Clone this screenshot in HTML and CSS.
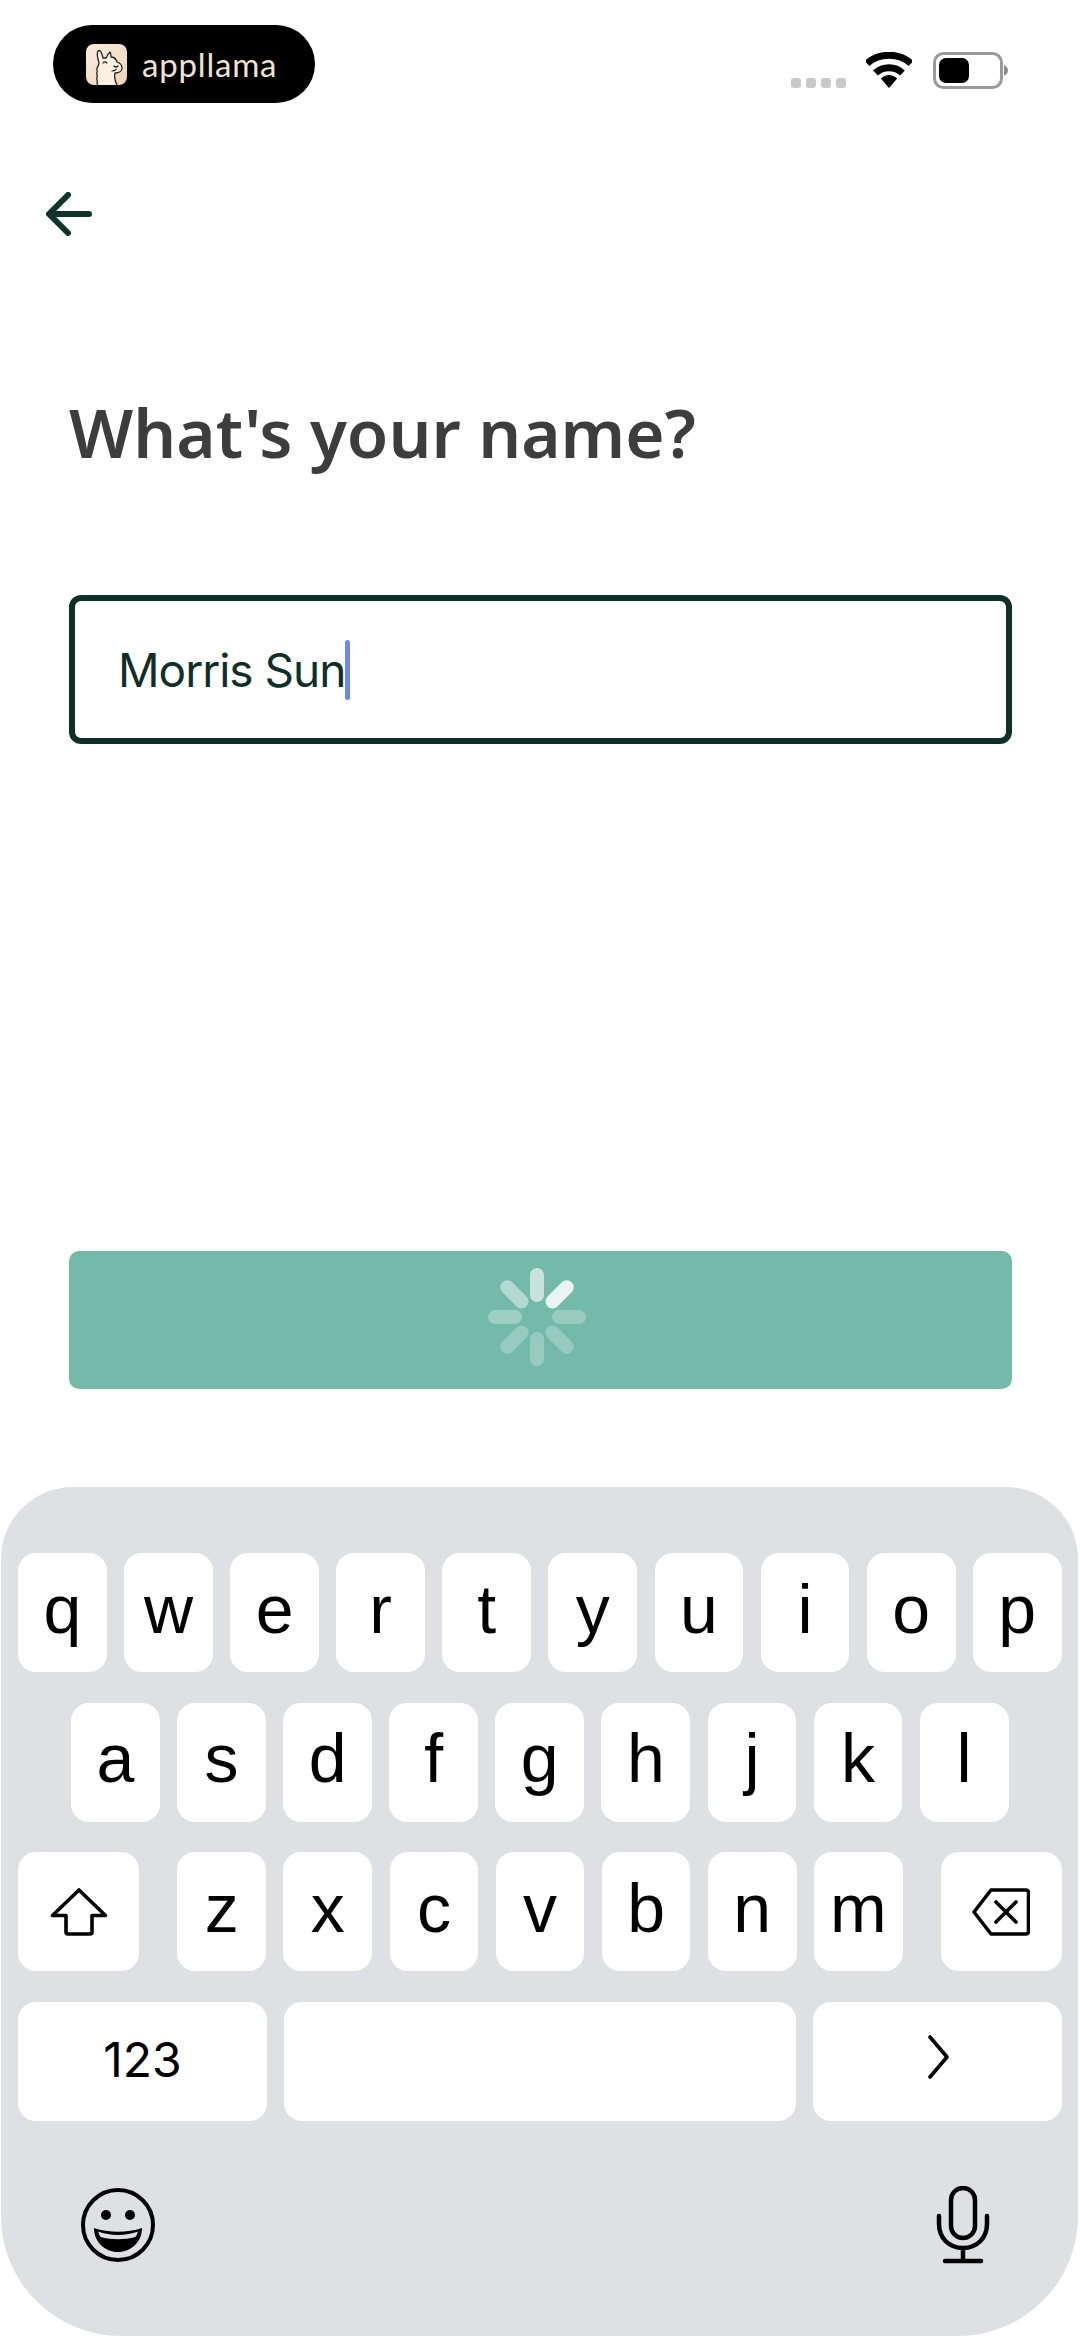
FILE: index.html
```html
<!DOCTYPE html>
<html lang="en">
<head>
<meta charset="utf-8">
<title>What's your name?</title>
<link rel="stylesheet" href="styles.css">
</head>
<body>
<div class="phone">
  <header class="status">
    <div class="pill">
      <svg class="llama" viewBox="0 0 41 41" width="41" height="41">
        <defs><linearGradient id="lg" x1="0" y1="0" x2="1" y2="1"><stop offset="0" stop-color="#fbeede"/><stop offset="1" stop-color="#ebd2b7"/></linearGradient></defs>
        <rect width="41" height="41" rx="8" fill="url(#lg)"/>
        <path d="M12 41c-2-2 0-3-1-5s1-3 0-5 1-3 0-5 2-4 2-7c-1-4-3-9-1-12 2-2 4 2 5 7 1 0 2 0 3 0 1-2 3-5 4-6 1 1 1 3 1 5 3 0 5 2 6 5 3 1 5 3 5 6 0 3-3 5-7 5-1 4 0 8 2 12" fill="#fbf0e2" stroke="#232323" stroke-width="1.300" stroke-linejoin="round"/>
        <path d="M17 19c1-1.500 3-1.500 4 0M28 22c1.500 1.500 3 1 4 0M26 27c2 0 3-.5 4-1.500" fill="none" stroke="#232323" stroke-width="1.200" stroke-linecap="round"/>
      </svg>
      <span class="brand">appllama</span>
    </div>
    <div class="sys">
      <div class="dots"><i></i><i></i><i></i><i></i></div>
      <svg class="wifi" viewBox="0 0 46 36" width="46" height="36">
        <path d="M1 11.500C13 0.500 33 0.500 45 11.500" fill="none" stroke="#000" stroke-width="7"/>
        <path d="M9.500 21C17 14 29 14 36.500 21" fill="none" stroke="#000" stroke-width="7"/>
        <path d="M14.800 26.500C19.500 21.800 26.500 21.800 31.200 26.500L23 36z"/>
      </svg>
      <svg class="batt" viewBox="0 0 76 37" width="76" height="37">
        <rect x="1.500" y="1.500" width="67" height="34" rx="9" fill="none" stroke="#9a9a9a" stroke-width="3"/>
        <rect x="6" y="6" width="30" height="25" rx="7"/>
        <path d="M71 13c2 1 4 3 4 5.500s-2 4.500-4 5.500z" fill="#8a8a8a"/>
      </svg>
    </div>
  </header>

  <button class="back" aria-label="Back">
    <svg viewBox="0 0 46 44" width="46" height="44"><path d="M43 22H4M22 3 3 22l19 19" fill="none" stroke="#0f3429" stroke-width="6" stroke-linecap="round" stroke-linejoin="round"/></svg>
  </button>

  <main class="form">
    <h1 class="title">What's your name?</h1>
    <div class="field"><span class="value">Morris Sun</span><span class="caret"></span></div>
    <div class="submit">
      <svg class="spin" viewBox="-50 -50 100 100" width="100" height="100">
        <g stroke="#fff" stroke-width="14" stroke-linecap="round">
          <line x1="0" y1="-22" x2="0" y2="-42" opacity=".6"/>
          <line x1="15.500" y1="-15.500" x2="29.700" y2="-29.700" opacity=".85"/>
          <line x1="22" y1="0" x2="42" y2="0" opacity=".25"/>
          <line x1="15.500" y1="15.500" x2="29.700" y2="29.700" opacity=".25"/>
          <line x1="0" y1="22" x2="0" y2="42" opacity=".25"/>
          <line x1="-15.500" y1="15.500" x2="-29.700" y2="29.700" opacity=".25"/>
          <line x1="-22" y1="0" x2="-42" y2="0" opacity=".3"/>
          <line x1="-15.500" y1="-15.500" x2="-29.700" y2="-29.700" opacity=".45"/>
        </g>
      </svg>
    </div>
  </main>

  <section class="kb">
    <div class="row"><b class="key">q</b><b class="key">w</b><b class="key">e</b><b class="key">r</b><b class="key">t</b><b class="key">y</b><b class="key">u</b><b class="key">i</b><b class="key">o</b><b class="key">p</b></div>
    <div class="row row-home"><b class="key">a</b><b class="key">s</b><b class="key">d</b><b class="key">f</b><b class="key">g</b><b class="key">h</b><b class="key">j</b><b class="key">k</b><b class="key">l</b></div>
    <div class="row row-third">
      <b class="key wide icon"><svg viewBox="0 0 58 48" width="58" height="48"><path d="M29 2 2.500 27.500H16V44a2 2 0 0 0 2 2h22a2 2 0 0 0 2-2V27.500h13.500z" fill="none" stroke="#000" stroke-width="3.600" stroke-linejoin="round"/></svg></b>
      <div class="letters"><b class="key">z</b><b class="key">x</b><b class="key">c</b><b class="key">v</b><b class="key">b</b><b class="key">n</b><b class="key">m</b></div>
      <b class="key wide icon"><svg viewBox="0 0 58 48" width="58" height="48"><path d="M19 2h35a2.500 2.500 0 0 1 2.500 2.500v39a2.500 2.500 0 0 1-2.500 2.500H19L2 24z" fill="none" stroke="#000" stroke-width="3.600" stroke-linejoin="round"/><path d="M24 14l20 20M44 14 24 34" stroke="#000" stroke-width="3.600" stroke-linecap="round"/></svg></b>
    </div>
    <div class="row">
      <b class="key bottom nums">123</b>
      <b class="key space"></b>
      <b class="key bottom"><svg viewBox="0 0 22 46" width="22" height="46"><path d="M3 3l17 20L3 43" fill="none" stroke="#000" stroke-width="3.600" stroke-linecap="round" stroke-linejoin="round"/></svg></b>
    </div>
    <div class="tools">
      <svg viewBox="0 0 76 76" width="76" height="76">
        <circle cx="38" cy="38" r="35" fill="none" stroke="#000" stroke-width="4"/>
        <circle cx="26" cy="28" r="5"/><circle cx="50" cy="28" r="5"/>
        <path d="M14 41C29 46 47 46 62 41 62 55 51 65 38 65S14 55 14 41z"/>
        <path d="M18 44.500C30 49 46 49 58 44.500 57 47 56.500 48.500 55.500 50 44 53 32 53 20.500 50 19.500 48.500 19 47 18 44.500z" fill="#dfe0e4"/>
      </svg>
      <svg viewBox="0 0 54 78" width="54" height="78">
        <rect x="15" y="2" width="24" height="50" rx="12" fill="none" stroke="#000" stroke-width="4.500"/>
        <path d="M3 30v8c0 14 10 24 24 24s24-10 24-24v-8M27 62v12M9 75h36" fill="none" stroke="#000" stroke-width="4.500" stroke-linecap="round"/>
      </svg>
    </div>
  </section>
</div>
</body>
</html>
```
FILE: styles.css
```css
* { box-sizing: border-box; }
html, body { margin: 0; padding: 0; background: #fff; }
.phone { width: 1080px; height: 2337px; display: flex; flex-direction: column; overflow: hidden; font-family: "Noto Sans", sans-serif; }

.status { height: 192px; padding: 25px 71px 0 53px; display: flex; justify-content: space-between; align-items: flex-start; flex: none; }
.pill { width: 262px; height: 78px; border-radius: 39px; background: #000; display: flex; align-items: center; padding-left: 33px; gap: 15px; }
.llama { flex: none; }
.brand { font-family: "Lato", sans-serif; font-weight: 400; font-size: 33px; letter-spacing: 0.800px; color: #efe3d3; line-height: 1; }
.sys { display: flex; align-items: flex-start; padding-top: 27px; }
.dots { display: flex; gap: 5px; margin-top: 26px; margin-right: 20px; }
.dots i { width: 10px; height: 10px; border-radius: 3px; background: #c9c9c9; display: block; }
.wifi { margin-right: 21px; }

.back { flex: none; align-self: flex-start; margin-left: 46px; width: 46px; height: 44px; padding: 0; border: 0; background: none; display: block; }

.form { flex: none; height: 1251px; padding: 0 68px 0 69px; display: flex; flex-direction: column; }
.title { margin: 164px 0 0; height: 64px; font-size: 67.400px; line-height: 64px; font-weight: 600; color: #3d3d3d; font-family: "Noto Sans", sans-serif; }
.field { margin-top: 131px; height: 149px; border: 6px solid #0f3029; border-radius: 12px; display: flex; align-items: center; padding-left: 43px; }
.value { font-family: "Inter", sans-serif; font-size: 46px; letter-spacing: -1px; color: #0f3029; }
.caret { width: 5px; height: 60px; border-radius: 3px; background: #6f89e0; }
.submit { margin-top: 507px; height: 138px; background: #73baa9; border-radius: 10px; display: flex; justify-content: center; padding-top: 16px; padding-right: 8px; }

.kb { flex: 1; margin: 0 2px 1px 1px; background: #dfe0e4; border-radius: 72px 72px 120px 120px; display: flex; flex-direction: column; padding: 66px 16px 0 17px; gap: 30.500px; }
.row { display: flex; gap: 17.300px; height: 119px; flex: none; }
.key { flex: 0 0 88.800px; height: 119px; padding-bottom: 8px; background: #fff; border-radius: 18px; display: flex; align-items: center; justify-content: center; font-family: "Liberation Sans", sans-serif; font-weight: 400; font-size: 68px; color: #000; line-height: 1; }
.icon { padding-bottom: 0; }
.row-home { padding: 0 53px; }
.row-third { justify-content: space-between; }
.letters { display: flex; gap: 17.300px; }
.wide { flex: 0 0 121px; }
.bottom { flex: 0 0 249px; }
.nums { font-family: "Inter", sans-serif; font-size: 48px; padding-bottom: 2px; }
.space { flex: 1; }
.tools { display: flex; justify-content: space-between; align-items: center; padding: 35px 72px 0 62px; }
```
